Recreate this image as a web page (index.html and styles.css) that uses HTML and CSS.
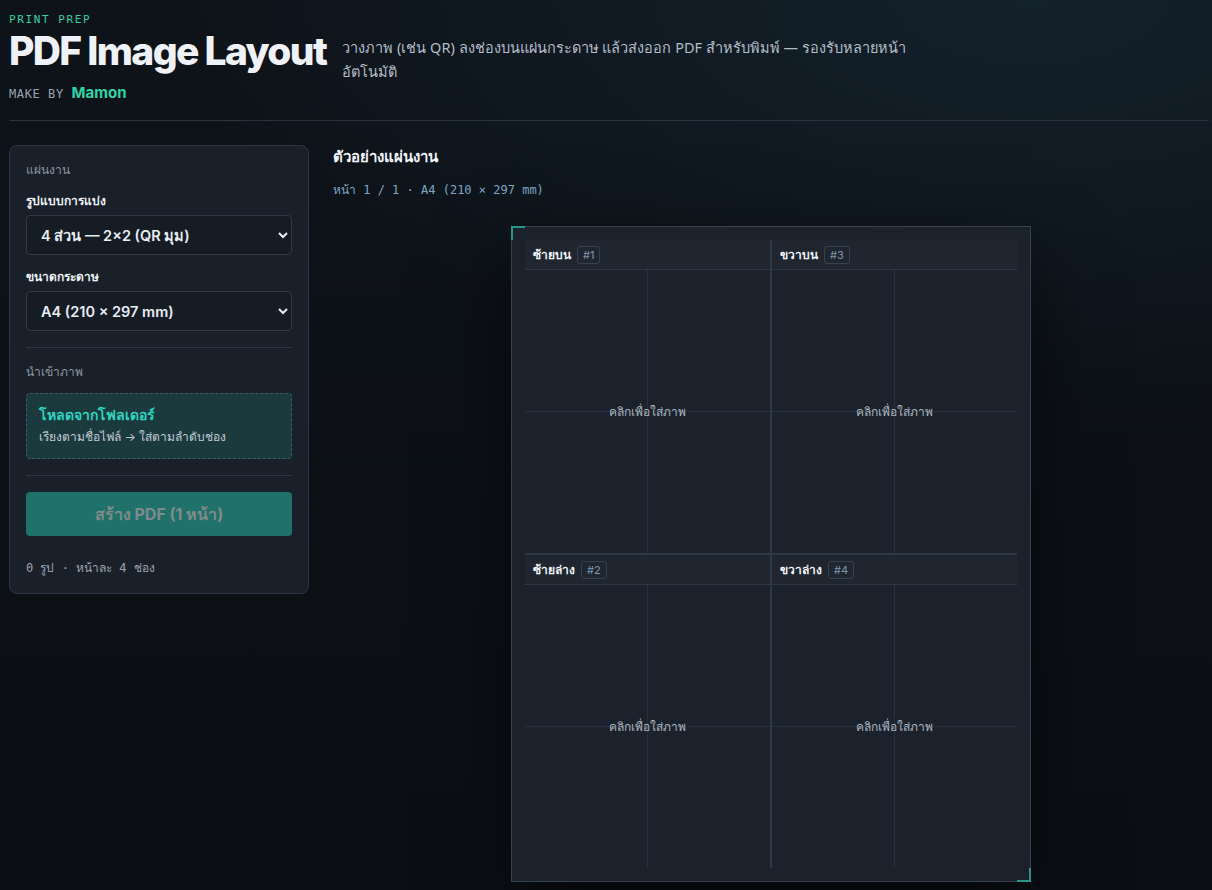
FILE: index.html
```html
<html>
  <head>
    <title>PDF Image Layout</title>
    <link rel="stylesheet" href="styles.css">
  </head>
  <body>

    <header class="top">
      <div class="brand">
        <div class="kicker">PRINT PREP</div>
        <h1 class="title">PDF Image Layout</h1>
        <div class="maker">MAKE BY <b>Mamon</b></div>
      </div>
      <p class="desc">วางภาพ (เช่น QR) ลงช่องบนแผ่นกระดาษ แล้วส่งออก PDF สำหรับพิมพ์ — รองรับหลายหน้าอัตโนมัติ</p>
    </header>

    <div class="layout">
      <aside class="panel">
        <div class="section-label">แผ่นงาน</div>

        <label class="field-label">รูปแบบการแบ่ง</label>
        <select class="select">
          <option>4 ส่วน — 2×2 (QR มุม)</option>
        </select>

        <label class="field-label">ขนาดกระดาษ</label>
        <select class="select">
          <option>A4 (210 × 297 mm)</option>
        </select>

        <hr class="divider">

        <div class="section-label">นำเข้าภาพ</div>
        <div class="dropzone">
          <div class="drop-title">โหลดจากโฟลเดอร์</div>
          <div class="drop-sub">เรียงตามชื่อไฟล์ → ใส่ตามลำดับช่อง</div>
        </div>

        <hr class="divider">

        <button class="btn-create" disabled>สร้าง PDF (1 หน้า)</button>

        <div class="stats">0 รูป · หน้าละ 4 ช่อง</div>
      </aside>

      <main class="preview">
        <h2 class="preview-title">ตัวอย่างแผ่นงาน</h2>
        <div class="preview-meta">หน้า 1 / 1 · A4 (210 × 297 mm)</div>

        <div class="stage">
          <div class="sheet">
            <span class="mark mark-tl"></span>
            <span class="mark mark-br"></span>
            <div class="grid">
              <div class="cell">
                <div class="cell-head">ซ้ายบน <span class="badge">#1</span></div>
                <div class="cell-body"><span class="hint">คลิกเพื่อใส่ภาพ</span></div>
              </div>
              <div class="cell">
                <div class="cell-head">ขวาบน <span class="badge">#3</span></div>
                <div class="cell-body"><span class="hint">คลิกเพื่อใส่ภาพ</span></div>
              </div>
              <div class="cell">
                <div class="cell-head">ซ้ายล่าง <span class="badge">#2</span></div>
                <div class="cell-body"><span class="hint">คลิกเพื่อใส่ภาพ</span></div>
              </div>
              <div class="cell">
                <div class="cell-head">ขวาล่าง <span class="badge">#4</span></div>
                <div class="cell-body"><span class="hint">คลิกเพื่อใส่ภาพ</span></div>
              </div>
            </div>
          </div>
        </div>
      </main>
    </div>

  </body>
</html>
```

FILE: styles.css
```css
body {
  margin: 0;
  padding: 12px 3px 0 9px;
  height: 890px;
  box-sizing: border-box;
  overflow: hidden;
  font-family: 'Inter', 'Noto Sans', sans-serif;
  color: #e6edf3;
  background:
    radial-gradient(ellipse 70% 45% at 85% 0%, #13212b 0%, rgba(19, 33, 43, 0) 100%),
    linear-gradient(180deg, #0e1319 0%, #0b0f14 100%);
  color-scheme: dark;
}

/* header */
.top {
  display: flex;
  align-items: flex-start;
  gap: 16px;
  padding-bottom: 16px;
  border-bottom: 1px solid #2a3441;
}

.kicker {
  font-family: 'DejaVu Sans Mono', monospace;
  font-size: 11px;
  letter-spacing: 1.6px;
  color: #34d1a0;
  line-height: 16px;
}

.title {
  margin: 0;
  font-size: 39px;
  font-weight: 800;
  letter-spacing: -1.65px;
  line-height: 46px;
  color: #eef2f6;
}

.maker {
  margin-top: 9px;
  font-family: 'DejaVu Sans Mono', monospace;
  font-size: 12px;
  letter-spacing: 0.6px;
  color: #97a3b0;
  line-height: 20px;
}

.maker b {
  font-family: 'Inter', sans-serif;
  font-size: 15px;
  font-weight: 700;
  letter-spacing: 0;
  color: #2dd4a8;
}

.desc {
  margin: 23px 0 0;
  max-width: 580px;
  font-family: 'Noto Sans', sans-serif;
  font-size: 14.5px;
  line-height: 24px;
  color: #b3bdc8;
}

/* main layout */
.layout {
  display: grid;
  grid-template-columns: 300px 1fr;
  gap: 24px;
  padding-top: 24px;
}

.panel {
  background: #1a2029;
  border: 1px solid #2c3642;
  border-radius: 8px;
  padding: 16px 16px 17px;
  display: flex;
  flex-direction: column;
  align-self: start;
}

.section-label {
  font-size: 12px;
  line-height: 16px;
  color: #8c97a3;
}

.field-label {
  margin-top: 15px;
  margin-bottom: 6px;
  font-size: 12px;
  font-weight: 700;
  line-height: 16px;
  color: #eef2f6;
}

.select + .field-label {
  margin-top: 14px;
}

.select {
  height: 40px;
  width: 100%;
  padding: 0 8px 0 10px;
  background-color: #161c24;
  border: 1px solid #2f3a46;
  border-radius: 4px;
  color: #e6edf3;
  font-family: 'Inter', sans-serif;
  font-size: 14.5px;
  font-weight: 600;
  outline: none;
}

.divider {
  border: none;
  border-top: 1px solid #2d3743;
  margin: 16px 0;
}

.dropzone {
  margin-top: 13px;
  height: 66px;
  box-sizing: border-box;
  padding: 11px 12px;
  background: #1b3a3e;
  border: 1px dashed #3f5d62;
  border-radius: 4px;
}

.drop-title {
  font-size: 14px;
  font-weight: 700;
  line-height: 20px;
  color: #2dd4bf;
}

.drop-sub {
  margin-top: 4px;
  font-size: 12px;
  line-height: 16px;
  color: #c1cad3;
}

.btn-create {
  height: 44px;
  border: none;
  border-radius: 4px;
  background: #20716a;
  color: #7f8b8a;
  font-family: 'Inter', sans-serif;
  font-size: 16px;
  font-weight: 700;
}

.stats {
  margin-top: 24px;
  font-family: 'DejaVu Sans Mono', monospace;
  font-size: 12px;
  line-height: 16px;
  color: #9aa5b1;
}

/* preview */
.preview-title {
  margin: 0;
  padding-top: 1px;
  font-size: 15px;
  font-weight: 700;
  line-height: 22px;
  color: #f1f5f9;
}

.preview-meta {
  margin-top: 14px;
  font-family: 'DejaVu Sans Mono', monospace;
  font-size: 12px;
  line-height: 16px;
  color: #7ea6c4;
}

.stage {
  display: flex;
  justify-content: center;
  padding-top: 28px;
}

.sheet {
  position: relative;
  width: 520px;
  height: 656px;
  box-sizing: border-box;
  padding: 13px;
  background: #1b222b;
  border: 1px solid #36414d;
  box-shadow: 0 24px 70px rgba(0, 0, 0, 0.55);
}

.mark {
  position: absolute;
  width: 12px;
  height: 12px;
  border-color: #2a9587;
  border-style: solid;
  border-width: 0;
}

.mark-tl {
  top: -1px;
  left: -1px;
  border-top-width: 2px;
  border-left-width: 2px;
}

.mark-br {
  bottom: -1px;
  right: -1px;
  border-bottom-width: 2px;
  border-right-width: 2px;
}

.grid {
  height: 100%;
  display: grid;
  grid-template-columns: 1fr 1fr;
  grid-template-rows: 1fr 1fr;
  gap: 2px;
  background: #2f3946;
}

.cell {
  display: flex;
  flex-direction: column;
  background: #1b222b;
}

.cell-head {
  height: 29px;
  flex-shrink: 0;
  display: flex;
  align-items: center;
  gap: 6px;
  padding: 0 8px;
  background: #1f2630;
  border-bottom: 1px solid #2f3946;
  font-size: 12px;
  font-weight: 700;
  color: #f1f5f9;
}

.badge {
  display: inline-block;
  height: 18px;
  box-sizing: border-box;
  padding: 0 5px;
  border: 1px solid #35414e;
  border-radius: 3px;
  font-size: 11px;
  font-weight: 400;
  line-height: 16px;
  color: #7d98b3;
}

.cell-body {
  flex: 1;
  display: flex;
  align-items: center;
  justify-content: center;
  background:
    linear-gradient(#27313d, #27313d) center / 1px 100% no-repeat,
    linear-gradient(#27313d, #27313d) center / 100% 1px no-repeat;
}

.hint {
  font-size: 12px;
  color: #a9b4bf;
}
```
